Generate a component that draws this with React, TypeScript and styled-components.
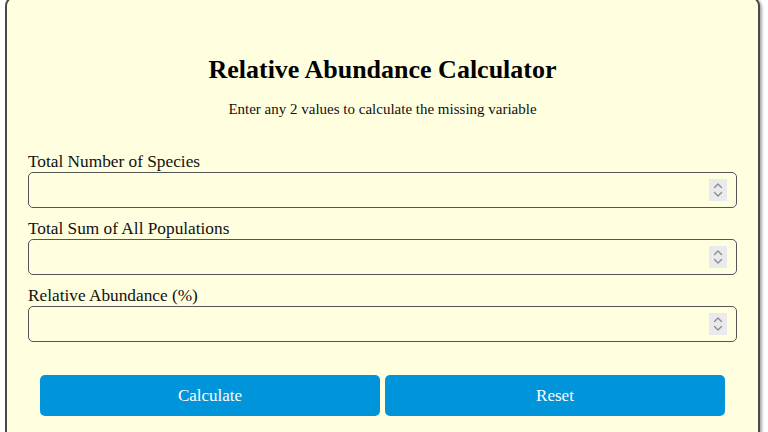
import React from "react";
import styled, { createGlobalStyle } from "styled-components";

const Global = createGlobalStyle`
  html, body { margin: 0; padding: 0; background: #ffffff; }
  body { font-family: "Liberation Serif", "Times New Roman", serif; }
  * { box-sizing: border-box; }
`;

const Page = styled.div`
  padding: 0 8px 0 5px;
`;

const Card = styled.div`
  margin-top: -4px;
  background: #ffffe0;
  border: 2px solid #4a4a4a;
  border-radius: 10px;
  box-shadow: 2px 2px 3px rgba(0, 0, 0, 0.35);
  padding: 57px 21px 40px 21px;
  color: #000;
`;

const Title = styled.h1`
  margin: 0;
  text-align: center;
  font-size: 26px;
  font-weight: bold;
  line-height: 30px;
`;

const Subtitle = styled.p`
  margin: 15px 0 34px;
  text-align: center;
  font-size: 15px;
  line-height: 18px;
  color: #111;
`;

const Field = styled.div`
  display: flex;
  flex-direction: column;
  margin-bottom: 11px;
`;

const Label = styled.label`
  font-size: 17.3px;
  line-height: 20px;
  color: #111;
`;

const InputWrap = styled.div`
  position: relative;
`;

const Input = styled.input`
  display: block;
  height: 36px;
  width: 100%;
  border: 1px solid #555;
  border-radius: 5px;
  background: transparent;
  font-family: inherit;
  font-size: 16px;
  padding: 0 32px 0 8px;
  -moz-appearance: textfield;
  &::-webkit-inner-spin-button,
  &::-webkit-outer-spin-button {
    -webkit-appearance: none;
    margin: 0;
  }
`;

const Spinner = styled.span`
  position: absolute;
  right: 10px;
  top: 7px;
  width: 18px;
  height: 22px;
  background: #e9e9ee;
  display: flex;
  align-items: center;
  justify-content: center;
  pointer-events: none;
`;

const Buttons = styled.div`
  display: flex;
  gap: 5px;
  padding: 0 12px;
  margin-top: 33px;
`;

const Button = styled.button`
  flex: 1;
  height: 41px;
  border: none;
  border-radius: 5px;
  background: #0095da;
  color: #fff;
  font-family: inherit;
  font-size: 17px;
  cursor: pointer;
`;

const fields = [
  "Total Number of Species",
  "Total Sum of All Populations",
  "Relative Abundance (%)",
];

function SpinIcon() {
  return (
    <svg width="10" height="16" viewBox="0 0 10 16" fill="none" stroke="#8a8a8a" strokeWidth="1.3" strokeLinecap="round" strokeLinejoin="round">
      <path d="M1.5 5.5 L5 2 L8.5 5.5" />
      <path d="M1.5 10.5 L5 14 L8.5 10.5" />
    </svg>
  );
}

export default function App() {
  return (
    <Page>
      <Global />
      <Card>
        <Title>Relative Abundance Calculator</Title>
        <Subtitle>Enter any 2 values to calculate the missing variable</Subtitle>
        {fields.map((f) => (
          <Field key={f}>
            <Label>{f}</Label>
            <InputWrap>
              <Input type="number" />
              <Spinner>
                <SpinIcon />
              </Spinner>
            </InputWrap>
          </Field>
        ))}
        <Buttons>
          <Button>Calculate</Button>
          <Button>Reset</Button>
        </Buttons>
      </Card>
    </Page>
  );
}
